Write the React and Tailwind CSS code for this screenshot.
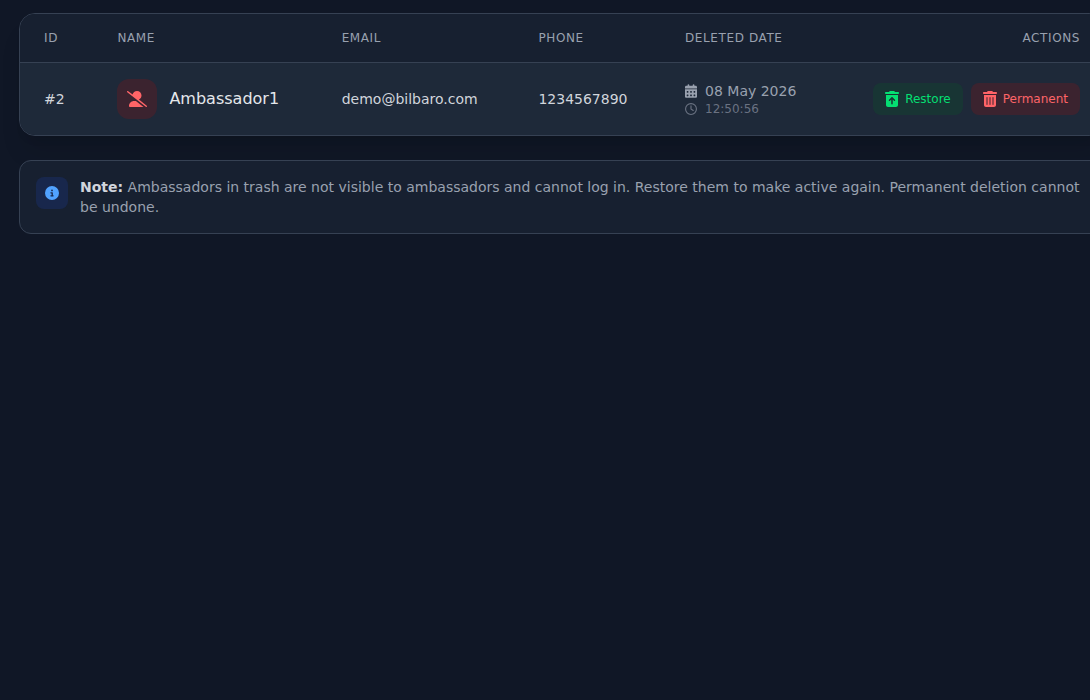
import {
  FaCalendarDays,
  FaCircleInfo,
  FaRegClock,
  FaTrashCan,
  FaTrashCanArrowUp,
  FaUserLargeSlash,
} from 'react-icons/fa6'

const AMBASSADORS = [
  { id: 2, name: 'Ambassador1', email: 'demo@bilbaro.com', phone: '1234567890', date: '08 May 2026', time: '12:50:56' },
]

const COLUMNS = ['ID', 'Name', 'Email', 'Phone', 'Deleted Date']

function AmbassadorRow({ item }) {
  return (
    <tr className="bg-gray-800">
      <td className="px-6 py-4 text-sm text-gray-300">#{item.id}</td>
      <td className="px-6 py-4">
        <div className="flex items-center gap-3">
          <div className="flex size-10 shrink-0 items-center justify-center rounded-xl bg-red-900/30 text-red-400">
            <FaUserLargeSlash className="h-4 w-5" />
          </div>
          <span className="text-base text-gray-200">{item.name}</span>
        </div>
      </td>
      <td className="px-6 py-4 text-sm text-gray-300">{item.email}</td>
      <td className="px-6 py-4 text-sm text-gray-300">{item.phone}</td>
      <td className="px-6 py-4">
        <div className="flex items-center gap-2 text-sm leading-5 text-gray-400">
          <FaCalendarDays className="h-3.5 w-3" />
          {item.date}
        </div>
        <div className="flex items-center gap-2 text-xs leading-4 text-gray-500">
          <FaRegClock className="size-3" />
          {item.time}
        </div>
      </td>
      <td className="px-6 py-4">
        <div className="flex items-center justify-end gap-2 text-xs">
          <button type="button" className="flex h-8 items-center gap-1.5 rounded-lg bg-green-900/30 px-3 text-green-400">
            <FaTrashCanArrowUp className="h-4 w-3.5" />
            Restore
          </button>
          <button type="button" className="flex h-8 items-center gap-1.5 rounded-lg bg-red-900/30 px-3 text-red-400">
            <FaTrashCan className="h-4 w-3.5" />
            Permanent
          </button>
        </div>
      </td>
    </tr>
  )
}

export default function App() {
  return (
    <div className="min-h-screen overflow-hidden bg-[#101726] font-['DejaVu_Sans',sans-serif]">
      <main className="-mr-[15px] ml-[19px] space-y-6 pt-[13px]">
        <div className="overflow-hidden rounded-2xl border border-gray-700 shadow-xl">
          <table className="w-full text-left">
            <thead>
              <tr className="border-b border-gray-700 bg-[#172030] text-xs tracking-wider text-gray-400 uppercase">
                {COLUMNS.map(c => (
                  <th key={c} className="px-6 py-4 font-normal">{c}</th>
                ))}
                <th className="px-6 py-4 text-right font-normal">Actions</th>
              </tr>
            </thead>
            <tbody>
              {AMBASSADORS.map(a => <AmbassadorRow key={a.id} item={a} />)}
            </tbody>
          </table>
        </div>

        <div className="flex items-start gap-3 rounded-xl border border-gray-700 bg-[#172030] p-4">
          <div className="flex size-8 shrink-0 items-center justify-center rounded-lg bg-blue-900/30 text-blue-400">
            <FaCircleInfo className="size-3.5" />
          </div>
          <p className="text-sm text-gray-400">
            <strong className="font-bold text-gray-300">Note:</strong> Ambassadors in trash are not visible to ambassadors and
            cannot log in. Restore them to make active again. Permanent deletion cannot be undone.
          </p>
        </div>
      </main>
    </div>
  )
}
